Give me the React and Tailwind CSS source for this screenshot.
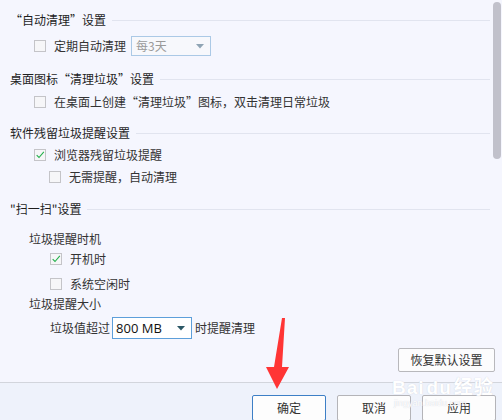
import React from "react";

const font = { fontFamily: '"Noto Sans CJK SC", "Noto Sans", sans-serif' };

function Box({ checked }) {
  return (
    <span className="w-[12px] h-[12px] border border-[#c4c4c8] bg-[#f6f6f8] flex items-center justify-center shrink-0">
      {checked && (
        <svg width="12" height="12" viewBox="0 0 12 12">
          <path d="M2 6.2 L4.8 9 L10.6 2.2" fill="none" stroke="#22b04b" strokeWidth="1.3" />
        </svg>
      )}
    </span>
  );
}

function Header({ children, className = "" }) {
  return (
    <div className={"flex items-center h-[20px] " + className}>
      <span className="text-[12px] text-[#1e1e1e] whitespace-nowrap leading-none">{children}</span>
      <div className="flex-1 h-px bg-[#e1e4ef] ml-[6px] mr-[4px]" />
    </div>
  );
}

function Check({ checked, label, indent, className = "" }) {
  return (
    <div className={"flex items-center h-[22px] gap-[8px] " + indent + " " + className}>
      <Box checked={checked} />
      <span className="text-[12px] text-[#333] leading-none whitespace-nowrap">{label}</span>
    </div>
  );
}

function Btn({ children, focus }) {
  return (
    <div
      className={
        "w-[74px] h-[26px] flex items-center justify-center text-[12px] text-[#333] bg-[#fdfdfd] border rounded-[2px] " +
        (focus ? "border-[#3d7fc6]" : "border-[#b4b4b8]")
      }
    >
      {children}
    </div>
  );
}

export default function App() {
  return (
    <div className="w-[502px] h-[420px] bg-[#f5f6fe] relative overflow-hidden" style={font}>
      <div className="h-[382px] pl-[10px] pr-[8px] flex flex-col">
        <Header className="mt-[10px]">“自动清理”设置</Header>
        <div className="flex items-center h-[22px] mt-[5px] pl-[24px]">
          <Box />
          <span className="ml-[8px] text-[12px] text-[#333] leading-none whitespace-nowrap">定期自动清理</span>
          <div className="ml-[5px] w-[80px] h-[20px] border border-[#abc9e6] bg-[#f7f8fc] flex items-center pl-[4px] pr-[6px]">
            <span className="text-[12px] text-[#9a9a9a] leading-none flex-1">每3天</span>
            <svg width="8" height="5" viewBox="0 0 8 5">
              <path d="M0 0 L8 0 L4 4.5 Z" fill="#8fa4b4" />
            </svg>
          </div>
        </div>

        <Header className="mt-[12px]">桌面图标“清理垃圾”设置</Header>
        <Check className="mt-[2px]" indent="pl-[24px]" label="在桌面上创建“清理垃圾”图标，双击清理日常垃圾" />

        <Header className="mt-[10px]">软件残留垃圾提醒设置</Header>
        <Check checked indent="pl-[24px] mt-[1px]" label="浏览器残留垃圾提醒" />
        <Check indent="pl-[39px]" label="无需提醒，自动清理" />

        <Header className="mt-[11px]">"扫一扫"设置</Header>
        <div className="mt-[10px] h-[19px] pl-[19px] flex items-center text-[12px] text-[#333] leading-none">垃圾提醒时机</div>
        <Check checked indent="pl-[40px]" label="开机时" />
        <Check className="mt-[3px]" indent="pl-[40px]" label="系统空闲时" />
        <div className="h-[18px] pl-[19px] flex items-center text-[12px] text-[#333] leading-none">垃圾提醒大小</div>
        <div className="mt-[4px] h-[22px] pl-[40px] flex items-center">
          <span className="text-[12px] text-[#333] leading-none whitespace-nowrap">垃圾值超过</span>
          <div className="ml-[2px] w-[80px] h-[22px] border border-[#5d9fda] bg-white flex items-center pl-[3px] pr-[6px]">
            <span className="text-[13px] text-[#111] leading-none flex-1" style={{ fontFamily: '"Open Sans", "Noto Sans", sans-serif' }}>800 MB</span>
            <svg width="8" height="5" viewBox="0 0 8 5">
              <path d="M0 0 L8 0 L4 4.5 Z" fill="#2c5866" />
            </svg>
          </div>
          <span className="ml-[3px] text-[12px] text-[#333] leading-none whitespace-nowrap">时提醒清理</span>
        </div>
        <div className="mt-[9px] flex justify-end pr-[-1px]">
          <div className="w-[97px] h-[24px] mr-[-1px] flex items-center justify-center text-[12px] text-[#333] bg-[#fcfcfd] border border-[#b8b8bc] rounded-[2px]">
            恢复默认设置
          </div>
        </div>
      </div>

      <div className="h-[38px] border-t border-[#d2d5dc] bg-[#eef2fb] flex justify-end gap-[11px] pr-[6px] pt-[12px]">
        <Btn focus>确定</Btn>
        <Btn>取消</Btn>
        <Btn>应用</Btn>
      </div>

      {/* scrollbar */}
      <div className="absolute left-[493px] top-[2px] w-[8px] h-[157px] rounded-full bg-[#c1c1cb]" />

      {/* watermark */}
      <div className="absolute left-[392px] top-[376px] leading-none select-none">
        <div className="text-[19px] font-bold text-[#ffffff] tracking-[1px]" style={{ fontFamily: '"Liberation Sans", sans-serif', textShadow: "0 0 1px #c8ccd6" }}>
          Bai<span className="mx-[2px]">du</span><span style={{ fontFamily: '"Noto Sans CJK SC", sans-serif' }}>经验</span>
        </div>
        <div className="text-[9px] text-[#ffffff] mt-[2px] pl-[2px]" style={{ fontFamily: '"Liberation Sans", sans-serif', textShadow: "0 0 1px #c8ccd6" }}>
          jingyan.baidu.com
        </div>
      </div>

      {/* red arrow */}
      <svg className="absolute left-0 top-0" width="502" height="420" viewBox="0 0 502 420">
        <path d="M282 318 L285 318 L282 367 L289 367 L277 389 L266 367 L274 367 Z" fill="#ff3535" />
      </svg>
    </div>
  );
}
